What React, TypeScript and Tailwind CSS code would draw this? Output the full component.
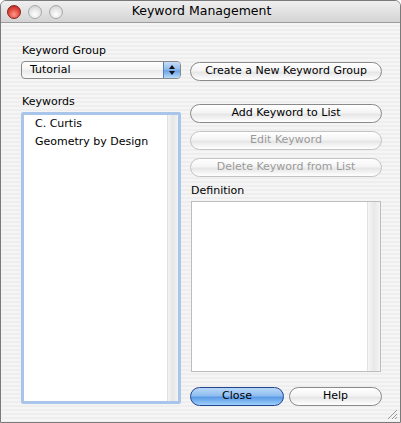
import React from 'react'

const font = "font-['DejaVu_Sans','Liberation_Sans',sans-serif]"

function AquaButton({ label, disabled, primary, className = '' }: { label: string; disabled?: boolean; primary?: boolean; className?: string }) {
  if (primary) {
    return (
      <div className={`h-[19px] rounded-full border border-[#23448f] bg-[linear-gradient(180deg,#b9d8f8_0%,#8fbdf0_45%,#5a9ae6_55%,#9fd0fb_100%)] flex items-center justify-center text-[11px] text-black ${className}`}>
        {label}
      </div>
    )
  }
  return (
    <div
      className={`h-[19px] rounded-full border flex items-center justify-center text-[11px] bg-[linear-gradient(180deg,#ffffff_0%,#f4f4f4_45%,#e6e6e6_55%,#ffffff_100%)] ${
        disabled ? 'border-[#c4c4c4] text-[#9a9a9a]' : 'border-[#8a8a8a] text-black'
      } ${className}`}
    >
      {label}
    </div>
  )
}

function Light({ red }: { red?: boolean }) {
  return red ? (
    <div className="w-[14px] h-[14px] rounded-full border border-[#8b1f1f] bg-[radial-gradient(circle_at_50%_70%,#ff9a8a_0%,#e0463a_55%,#a52020_100%)]" />
  ) : (
    <div className="w-[14px] h-[14px] rounded-full border border-[#a8a8a8] bg-[radial-gradient(circle_at_50%_70%,#ffffff_0%,#e2e2e2_60%,#c4c4c4_100%)]" />
  )
}

export default function App() {
  return (
    <div className={`w-[401px] h-[423px] bg-white ${font}`}>
      <div className="w-full h-full rounded-t-[6px] border border-[#7a7a7a] flex flex-col overflow-hidden bg-[repeating-linear-gradient(180deg,#eeeeee_0px,#eeeeee_2px,#f5f5f5_2px,#f5f5f5_4px)]">
        {/* title bar */}
        <div className="h-[22px] shrink-0 relative flex items-center border-b border-[#9c9c9c] bg-[linear-gradient(180deg,#efefef_0%,#e2e2e2_50%,#d3d3d3_100%)]">
          <div className="flex gap-[7px] pl-[6px] pt-[1px]">
            <Light red />
            <Light />
            <Light />
          </div>
          <div className="absolute inset-0 flex items-center justify-center text-[12.5px] text-black pl-[2px]">Keyword Management</div>
        </div>

        {/* body */}
        <div className="flex-1 relative flex gap-[9px] pl-[20px] pt-[21px]">
          {/* left column */}
          <div className="w-[160px] flex flex-col">
            <div className="text-[11px] leading-[14px] text-black pl-[1px]">Keyword Group</div>
            <div className="mt-[3px] h-[18px] flex rounded-[4px] border border-[#8a8a8a] overflow-hidden bg-[linear-gradient(180deg,#ffffff_0%,#f3f3f3_50%,#e9e9e9_51%,#fafafa_100%)]">
              <div className="flex-1 pl-[8px] text-[11px] leading-[16px] text-black">Tutorial</div>
              <div className="w-[17px] flex flex-col items-center justify-center gap-[2px] border-l border-[#5a7fbf] bg-[linear-gradient(180deg,#c6dcf6_0%,#94bcec_45%,#6aa2e6_55%,#b7dcfb_100%)]">
                <svg width="6" height="4" viewBox="0 0 6 4"><path d="M3 0L6 4H0Z" fill="#111" /></svg>
                <svg width="6" height="4" viewBox="0 0 6 4"><path d="M0 0H6L3 4Z" fill="#111" /></svg>
              </div>
            </div>

            <div className="mt-[16px] text-[11px] leading-[14px] text-black pl-[1px]">Keywords</div>
            <div className="mt-[3px] h-[292px] rounded-[2px] border-[3px] border-[#a9c6ea] flex bg-white">
              <div className="flex-1 pl-[11px] text-[11px] leading-[18px] text-black">
                <div>C. Curtis</div>
                <div>Geometry by Design</div>
              </div>
              <div className="w-[11px] border-l border-[#e0e0e0] bg-[linear-gradient(90deg,#f3f3f3_0%,#e6e6e6_50%,#f3f3f3_100%)]" />
            </div>
          </div>

          {/* right column */}
          <div className="w-[192px] flex flex-col">
            <AquaButton label="Create a New Keyword Group" className="mt-[18px]" />
            <AquaButton label="Add Keyword to List" className="mt-[23px]" />
            <AquaButton label="Edit Keyword" disabled className="mt-[8px]" />
            <AquaButton label="Delete Keyword from List" disabled className="mt-[8px]" />
            <div className="mt-[7px] text-[11px] leading-[14px] text-black pl-[1px]">Definition</div>
            <div className="mt-[3px] ml-[1px] w-[190px] h-[171px] border border-[#bdbdbd] flex bg-white">
              <div className="flex-1" />
              <div className="w-[13px] border-l border-[#e2e2e2] bg-[linear-gradient(90deg,#f6f6f6_0%,#e8e8e8_50%,#f4f4f4_100%)]" />
            </div>
            <div className="mt-[15px] flex gap-[5px]">
              <AquaButton label="Close" primary className="w-[94px]" />
              <AquaButton label="Help" className="w-[93px]" />
            </div>
          </div>

          {/* resize grip */}
          <svg className="absolute right-[2px] bottom-[2px]" width="11" height="11" viewBox="0 0 11 11">
            <path d="M10 1L1 10M10 5L5 10M10 8L8 10" stroke="#9a9a9a" strokeWidth="1" />
          </svg>
        </div>
      </div>
    </div>
  )
}
